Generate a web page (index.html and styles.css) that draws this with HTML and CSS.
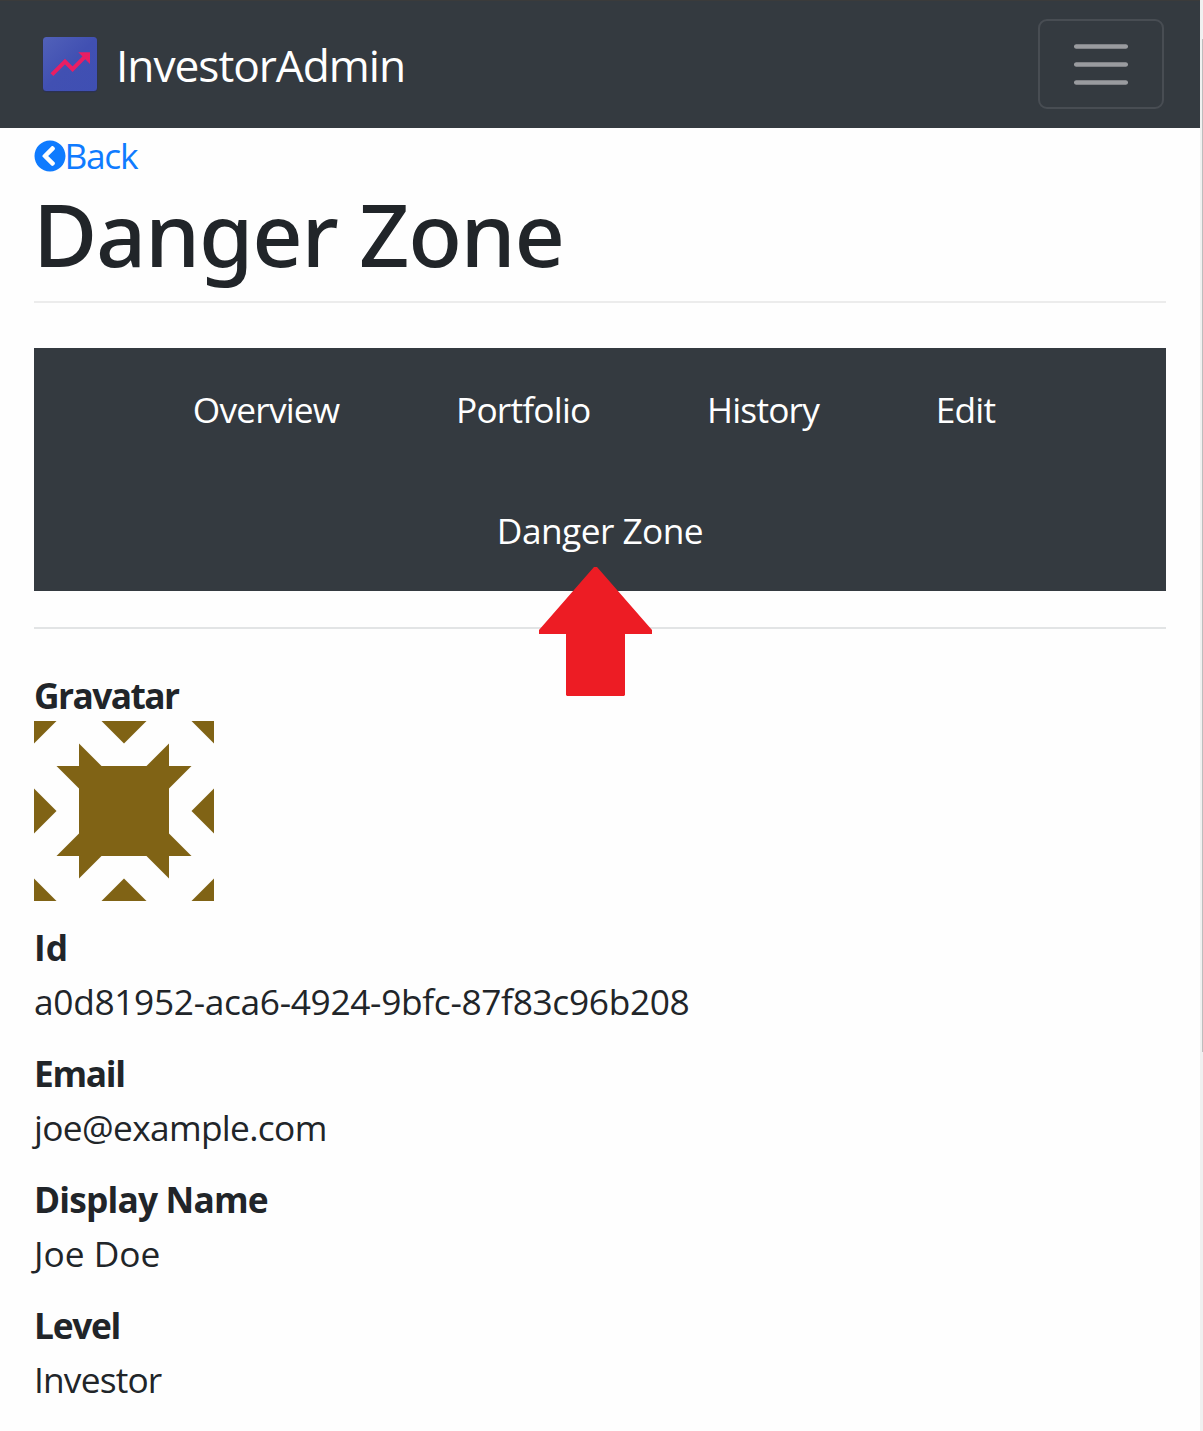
FILE: index.html
```
<!DOCTYPE html>
<html lang="en">
<head>
<meta charset="utf-8">
<title>InvestorAdmin - Danger Zone</title>
<link rel="stylesheet" href="styles.css">
</head>
<body>
<div class="viewport">
  <div class="page">
    <header class="navbar">
      <a class="brand" href="#">
        <svg class="brand-logo" width="58" height="60" viewBox="-2 -2 58 60">
          <defs>
            <linearGradient id="tile" x1="0" y1="0" x2="1" y2="1">
              <stop offset="0" stop-color="#5161b9"/>
              <stop offset=".5" stop-color="#4150b2"/>
              <stop offset="1" stop-color="#3f4fb3"/>
            </linearGradient>
          </defs>
          <rect x="-.3" y="1" width="54.6" height="54.3" rx="4" fill="#2b3152"/>
          <rect width="54" height="54" rx="3.5" fill="url(#tile)"/>
          <path d="M8.9 37.6 22 24.5l7.6 7.6L43 18.7" fill="none" stroke="#e91e63" stroke-width="4"/>
          <path d="M35.3 15.2H47V27z" fill="#e91e63"/>
        </svg>
        <span class="brand-name">InvestorAdmin</span>
      </a>
      <button class="toggler" type="button" aria-label="Toggle navigation">
        <svg width="54" height="42" viewBox="0 -.5 54 42" stroke="#999b9f" stroke-width="4.5" stroke-linecap="round">
          <path d="M2.2 3h49.6M2.2 21h49.6M2.2 39h49.6"/>
        </svg>
      </button>
    </header>

    <main class="content">
      <a class="back" href="#">
        <svg width="32" height="32" viewBox="0 0 512 512" fill="#0f7bff"><path d="M256 504C119 504 8 393 8 256S119 8 256 8s248 111 248 248-111 248-248 248zM142.1 273l135.5 135.5c9.4 9.4 24.6 9.4 33.9 0l17-17c9.4-9.4 9.4-24.6 0-33.9L226.9 256l101.6-101.6c9.4-9.4 9.4-24.6 0-33.9l-17-17c-9.4-9.4-24.6-9.4-33.9 0L142.1 239c-9.4 9.4-9.4 24.6 0 34z"/></svg>
        <span class="back-label">Back</span>
      </a>
      <h1 class="title">Danger Zone</h1>
      <hr class="rule">

      <nav class="tabs">
        <a class="tab" href="#">Overview</a>
        <a class="tab" href="#">Portfolio</a>
        <a class="tab" href="#">History</a>
        <a class="tab tab-last" href="#">Edit</a>
        <a class="tab tab-current" href="#">Danger Zone
          <svg class="pointer" width="113" height="129" viewBox="0 0 113 129"><path d="M55 0h3l55 63v4H86v61l-1 1H28l-1-1V67H0v-4z" fill="#ed1c24"/></svg>
        </a>
      </nav>
      <hr class="rule rule-strong">

      <dl class="details">
        <div class="field">
          <dt class="tight-4">Gravatar</dt>
          <dd class="avatar">
            <svg width="180" height="180" viewBox="0 0 8 8" fill="#806315">
              <path d="M0 0h1L0 1zM3 0h2L4 1zM7 0h1v1zM0 3l1 1-1 1zM8 3v2L7 4zM0 7l1 1H0zM4 7l1 1H3zM8 7v1H7z"/>
              <path d="M2 1l1 1h2l1-1v1h1L6 3v2l1 1H6v1L5 6H3L2 7V6H1l1-1V3L1 2h1z"/>
            </svg>
          </dd>
        </div>
        <div class="field">
          <dt>Id</dt>
          <dd class="uuid">a0d81952-aca6-4924-9bfc-87f83c96b208</dd>
        </div>
        <div class="field">
          <dt class="tight-3">Email</dt>
          <dd class="tight-1">joe@example.com</dd>
        </div>
        <div class="field">
          <dt class="tight-2">Display Name</dt>
          <dd>Joe Doe</dd>
        </div>
        <div class="field">
          <dt class="tight-3">Level</dt>
          <dd class="tight-2">Investor</dd>
        </div>
      </dl>
    </main>
  </div>
  <div class="scrollbar"><div class="thumb"></div></div>
</div>
</body>
</html>
```
FILE: styles.css
```
* { box-sizing: border-box; }

body {
  margin: 0;
  background: #fefefe;
  color: #212529;
  font: 35.3px/52px "Open Sans", "Noto Sans", sans-serif;
}

a { text-decoration: none; }

.viewport {
  display: flex;
  height: 1431px;
  overflow: hidden;
}

.page { width: 1200px; }

.navbar {
  display: flex;
  justify-content: space-between;
  align-items: center;
  height: 128px;
  padding: 0 36px 1px 41px;
  border-top: 1px solid #3b3b3b;
  background: #343a40;
}

.brand {
  display: flex;
  align-items: center;
  gap: 17px;
  color: #fff;
}

.brand-logo { margin-top: 1px; }

.brand-name {
  padding-top: 1px;
  font-size: 44.3px;
  letter-spacing: -1.05px;
}

.toggler {
  display: flex;
  justify-content: center;
  align-items: center;
  width: 126px;
  height: 90px;
  padding: 0;
  border: 2px solid #484d53;
  border-radius: 9px;
  background: transparent;
}

.content { padding: 0 34px; }

.back {
  display: flex;
  align-items: center;
  height: 54px;
  padding-top: 1px;
  color: #0f7bff;
}

.back svg { margin: 0 0 0 -.5px; }

.back-label {
  margin: -2px 0 0 -1px;
  letter-spacing: -1.3px;
}

.title {
  margin: -3px 0 0 -1px;
  font: 500 88px/108px "Noto Sans", sans-serif;
  letter-spacing: -1.3px;
}

.rule {
  height: 2px;
  margin: 14px 0 45px;
  border: 0;
  background: #ececec;
}

.rule-strong {
  margin: 36px 0 38px;
  background: #e2e4e5;
}

.tabs {
  display: flex;
  flex-wrap: wrap;
  justify-content: center;
  align-content: flex-start;
  height: 243px;
  background: #343a40;
}

.tab {
  height: 121px;
  padding: 35px 58.3px 0;
  color: #fff;
  letter-spacing: -.8px;
}

.tab-last { margin-right: 12px; }

.tab-current {
  position: relative;
  letter-spacing: -.55px;
}

.pointer {
  position: absolute;
  top: 98px;
  left: 100px;
}

.tight-1 { letter-spacing: -.66px; }
.tight-2 { letter-spacing: -.82px; }
.tight-3 { letter-spacing: -1.3px; }
.tight-4 { letter-spacing: -1.55px; }
.uuid { letter-spacing: -.33px; }

.details {
  display: flex;
  flex-direction: column;
  gap: 18px;
  margin: 0;
}

.field dt,
.field dd {
  height: 54px;
  margin: 0;
  padding-top: 2px;
}

.field dt { font-weight: 700; }

.field .avatar {
  display: flex;
  height: 180px;
  padding: 0;
}

.scrollbar {
  width: 3px;
  padding: 39px 0 0 2px;
  background: #f0f0f0;
}

.thumb {
  height: 1013px;
  background: #bdbdbd;
}
```
